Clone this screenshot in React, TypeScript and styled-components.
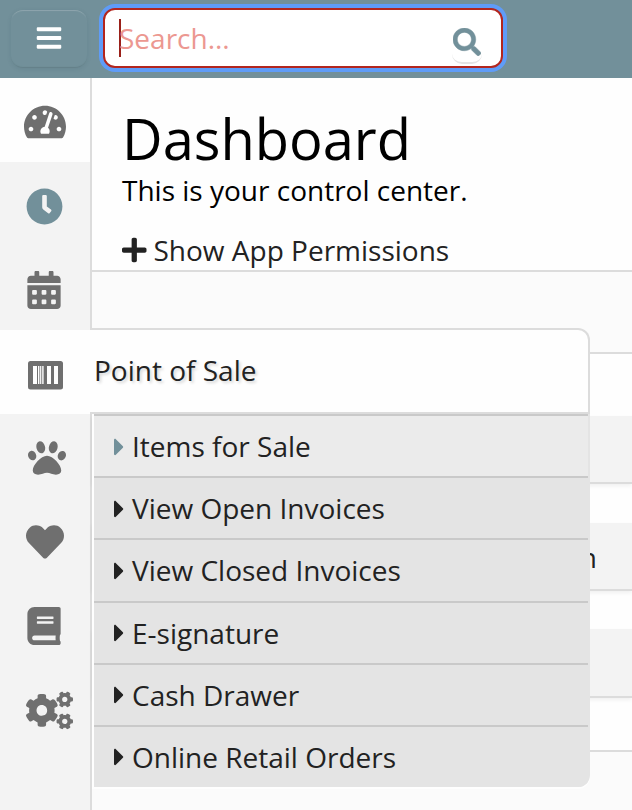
import React from "react";
import styled, { createGlobalStyle } from "styled-components";
import {
  FaBars,
  FaBook,
  FaCalendarAlt,
  FaCaretRight,
  FaClock,
  FaCogs,
  FaHeart,
  FaPaw,
  FaPlus,
  FaSearch,
  FaTachometerAlt,
} from "react-icons/fa";

const GlobalStyle = createGlobalStyle`
  *, *::before, *::after { box-sizing: border-box; }
  body {
    margin: 0;
    overflow: hidden;
    background: #fbfbfb;
    color: #222;
    font-family: "Open Sans", sans-serif;
    font-size: 28px;
  }
`;

const Page = styled.div`
  display: flex;
  flex-direction: column;
  width: 632px;
  height: 810px;
  overflow: hidden;
`;

const TopBar = styled.header`
  display: flex;
  flex: none;
  height: 78px;
  background: #72909a;
`;

const MenuButton = styled.button`
  display: flex;
  align-items: center;
  justify-content: center;
  width: 76px;
  height: 58px;
  margin: 10px 0 0 11px;
  padding: 0 1px 2px 0;
  border: 0;
  border-radius: 12px;
  background: transparent;
  color: #fff;
  box-shadow: inset 0 2px 1px -1px #8fa6ae, inset 0 -2px 1px -1px #648089, 0 1px 4px rgba(50, 80, 90, 0.14);
`;

const SearchBox = styled.div`
  display: flex;
  width: 400px;
  height: 60px;
  margin: 8px 0 0 16px;
  padding: 0 19px 0 14px;
  justify-content: space-between;
  border: 2px solid #b3261e;
  border-radius: 12px;
  background: #fff;
  box-shadow: 0 0 0 4px #5f9cf8;
`;

const Placeholder = styled.span`
  height: 38px;
  margin-top: 9px;
  border-left: 2px solid #9a2019;
  color: #ec9891;
  line-height: 38px;
  text-indent: -2px;
`;

const SearchButton = styled.span`
  display: flex;
  align-items: flex-start;
  justify-content: center;
  width: 30px;
  height: 42px;
  margin-top: 12px;
  padding-top: 6px;
  border-bottom: 2px solid #e4e4e4;
  border-radius: 10px;
  color: #72909a;

  svg {
    flex: none;
    stroke: currentColor;
    stroke-width: 8px;
  }
`;

const Body = styled.div`
  display: flex;
  flex: 1;
  min-height: 0;
`;

const Sidebar = styled.nav`
  position: relative;
  display: flex;
  flex: none;
  flex-direction: column;
  width: 92px;
  border-right: 2px solid #dcdcdc;
  background: #f3f3f3;
`;

const NavItem = styled.a<{ $active?: boolean; $tint?: boolean; $left: number }>`
  display: flex;
  align-items: center;
  height: 84px;
  padding: 4px 0 0 ${(p) => p.$left}px;
  background: ${(p) => (p.$active ? "#fefefe" : "transparent")};
  color: ${(p) => (p.$tint ? "#72909a" : "#6f6f6f")};
`;

const Flyout = styled.div`
  position: absolute;
  top: 250px;
  left: 90px;
  z-index: 2;
  width: 500px;
`;

const FlyoutTitle = styled.div`
  height: 86px;
  padding-left: 4px;
  border: 2px solid #dcdcdc;
  border-left: 0;
  border-radius: 0 12px 0 0;
  background: #fefefe;
  line-height: 80px;
  text-shadow: 2px 2px 3px rgba(0, 0, 0, 0.16);
`;

const FlyoutList = styled.div`
  height: 375px;
  margin-left: 2px;
  padding: 0 0 2px 2px;
  background: #fefefe;
  border-radius: 0 0 12px 0;
`;

const ListSurface = styled.div`
  display: grid;
  grid-template-rows: repeat(6, 1fr);
  height: 373px;
  padding-right: 2px;
  border-radius: 0 0 12px 0;
  overflow: hidden;
  background: #e4e4e4;
`;

const FlyoutLink = styled.a<{ $current?: boolean }>`
  display: flex;
  align-items: center;
  gap: 7.5px;
  padding-left: 20px;
  border-top: 2px solid #c9c9c9;
  background: ${(p) => (p.$current ? "#ebebeb" : "#e4e4e4")};
  white-space: nowrap;

  svg {
    width: 10.5px;
    height: 28px;
    margin-top: 1px;
    color: ${(p) => (p.$current ? "#72909a" : "#222")};
  }
`;

const Main = styled.main`
  flex: 1;
  min-width: 0;
`;

const Intro = styled.section`
  height: 194px;
  padding: 22px 0 0 30px;
  border-bottom: 2px solid #dcdcdc;
  background: #fefefe;
  color: #000;
`;

const Heading = styled.h1`
  margin: 0;
  font-size: 56px;
  font-weight: 400;
  line-height: 77px;
`;

const Subtitle = styled.p`
  margin: -2px 0 0;
  line-height: 30px;
`;

const PermissionsToggle = styled.a`
  display: flex;
  align-items: center;
  gap: 7px;
  height: 40px;
  margin-top: 25px;
  color: #222;

  svg {
    width: 24.5px;
    height: 28px;
  }
`;

const Band = styled.div<{ $height: number; $tone: string; $line?: boolean; $raised?: boolean }>`
  height: ${(p) => p.$height}px;
  border-bottom: ${(p) => (p.$line ? "2px solid #dcdcdc" : "0")};
  background: ${(p) => p.$tone};
  box-shadow: ${(p) => (p.$raised ? "0 2px 4px rgba(0, 0, 0, 0.06)" : "none")};
  position: ${(p) => (p.$raised ? "relative" : "static")};
  padding-right: 35px;
  text-align: right;
  line-height: 68px;
`;

const BarcodeIcon = () => (
  <svg width="36" height="31" viewBox="0 0 36 31">
    <rect x="0" y="2" width="35" height="28.5" rx="2.5" fill="#6f6f6f" />
    <g fill="#fefefe">
      <rect x="5" y="7" width="4" height="18" />
      <rect x="10" y="7" width="1.4" height="18" />
      <rect x="12.1" y="7" width="1.2" height="18" />
      <rect x="14.2" y="7" width="1.4" height="18" />
      <rect x="19" y="7" width="4" height="18" />
      <rect x="26" y="7" width="4" height="18" />
    </g>
  </svg>
);

const menu = [
  "Items for Sale",
  "View Open Invoices",
  "View Closed Invoices",
  "E-signature",
  "Cash Drawer",
  "Online Retail Orders",
];

export default function App() {
  return (
    <Page>
      <GlobalStyle />
      <TopBar>
        <MenuButton aria-label="Menu">
          <FaBars size={28} />
        </MenuButton>
        <SearchBox>
          <Placeholder>Search...</Placeholder>
          <SearchButton>
            <FaSearch size={28} />
          </SearchButton>
        </SearchBox>
      </TopBar>
      <Body>
        <Sidebar>
          <NavItem $active $left={24}>
            <FaTachometerAlt size={42} />
          </NavItem>
          <NavItem $tint $left={26}>
            <FaClock size={37} />
          </NavItem>
          <NavItem $left={25}>
            <FaCalendarAlt size={38} />
          </NavItem>
          <NavItem $active $left={28}>
            <BarcodeIcon />
          </NavItem>
          <NavItem $left={28}>
            <FaPaw size={38} />
          </NavItem>
          <NavItem $left={26}>
            <FaHeart size={38} />
          </NavItem>
          <NavItem $left={25}>
            <FaBook size={38} />
          </NavItem>
          <NavItem $left={26}>
            <FaCogs size={47} />
          </NavItem>
          <Flyout>
            <FlyoutTitle>Point of Sale</FlyoutTitle>
            <FlyoutList>
              <ListSurface>
                {menu.map((label, i) => (
                  <FlyoutLink key={label} $current={i === 0}>
                    <FaCaretRight />
                    {label}
                  </FlyoutLink>
                ))}
              </ListSurface>
            </FlyoutList>
          </Flyout>
        </Sidebar>
        <Main>
          <Intro>
            <Heading>Dashboard</Heading>
            <Subtitle>This is your control center.</Subtitle>
            <PermissionsToggle>
              <FaPlus />
              Show App Permissions
            </PermissionsToggle>
          </Intro>
          <Band $height={82} $tone="#fbfbfb" $line />
          <Band $height={62} $tone="#fefefe" />
          <Band $height={68} $tone="#f3f3f3" $line $raised />
          <Band $height={39} $tone="#fefefe" />
          <Band $height={68} $tone="#f3f3f3" $line $raised>n</Band>
          <Band $height={38} $tone="#fefefe" />
          <Band $height={69} $tone="#f3f3f3" $line $raised />
          <Band $height={54} $tone="#fefefe" $line />
        </Main>
      </Body>
    </Page>
  );
}
